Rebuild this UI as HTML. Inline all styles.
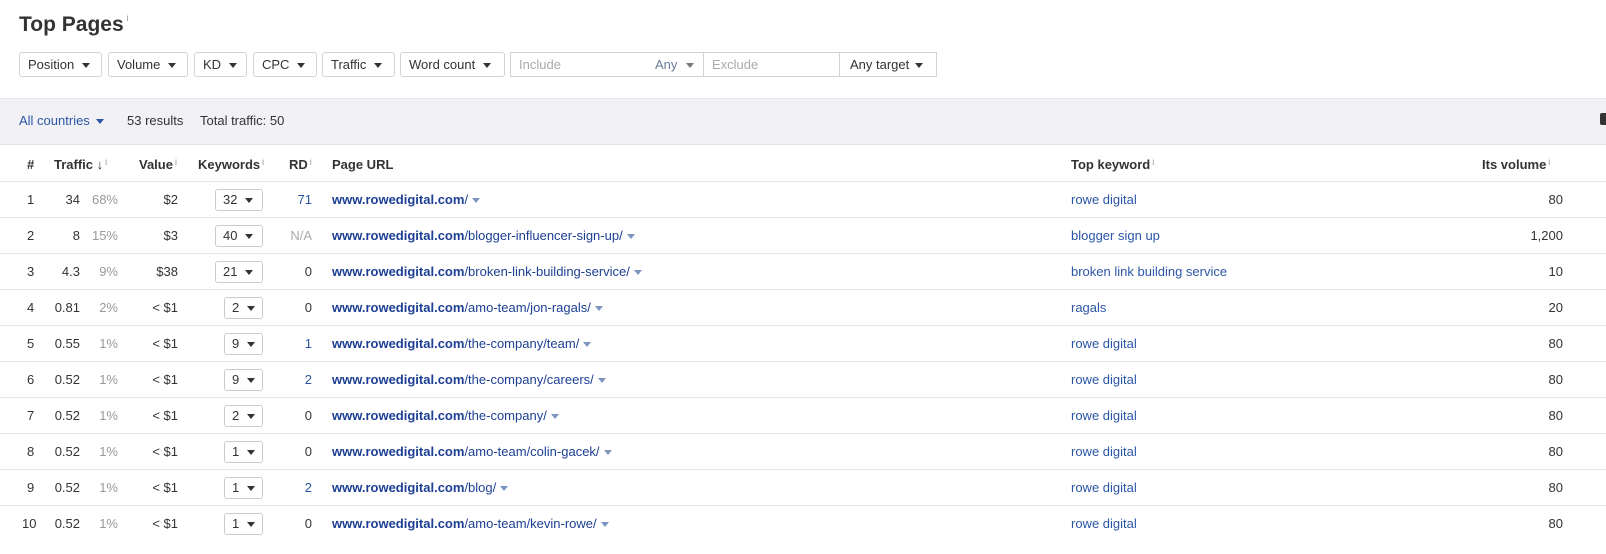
<!DOCTYPE html>
<html><head><meta charset="utf-8"><style>
*{box-sizing:border-box;margin:0;padding:0}
body{width:1606px;height:554px;background:#fff;font-family:"Liberation Sans",Arial,sans-serif;font-size:13px;color:#333;position:relative;overflow:hidden}
.a{position:absolute;white-space:nowrap}
.btn{position:absolute;top:52px;height:25px;border:1px solid #d3d3d3;border-radius:3px;line-height:23px;padding-left:8px;color:#333}
.tri{display:inline-block;width:0;height:0;border-left:4px solid transparent;border-right:4px solid transparent;border-top:5px solid #333;vertical-align:middle;margin-left:8px}
.th{position:absolute;top:157px;font-weight:bold;color:#333}
.i{font-weight:normal;color:#999;font-size:9px;vertical-align:top;margin-left:2px}
.row{position:absolute;left:0;width:1606px;height:36px;border-top:1px solid #e6e6e6}
.row .a{top:10px}
.r{text-align:right}
.sel{position:absolute;top:7px;height:22px;border:1px solid #ccc;border-radius:3px;line-height:20px;padding-left:7px}
.sel .tri{margin-left:8px}
.u{color:#1c3f94}
.u b{color:#1c3f94}
.st{display:inline-block;width:0;height:0;border-left:4px solid transparent;border-right:4px solid transparent;border-top:5px solid #7d93c0;vertical-align:middle;margin-left:4px}
.k{color:#2b56a6}
</style></head><body>
<div class="a" style="left:19px;top:13px;font-size:21px;font-weight:bold;color:#333">Top Pages<span style="font-size:9px;color:#999;font-weight:normal;vertical-align:top;margin-left:3px">i</span></div>
<div class="btn" style="left:19px;width:83px">Position<span class="tri"></span></div>
<div class="btn" style="left:108px;width:80px">Volume<span class="tri"></span></div>
<div class="btn" style="left:194px;width:53px">KD<span class="tri"></span></div>
<div class="btn" style="left:253px;width:64px">CPC<span class="tri"></span></div>
<div class="btn" style="left:322px;width:73px">Traffic<span class="tri"></span></div>
<div class="btn" style="left:400px;width:105px">Word count<span class="tri"></span></div>
<div class="btn" style="left:510px;width:427px;border-radius:0;padding:0">
 <span class="a" style="left:8px;color:#aaa">Include</span>
 <span class="a" style="left:144px;color:#6a7c99">Any<span class="tri" style="border-top-color:#777;margin-left:9px"></span></span>
 <span class="a" style="left:192px;top:0;height:23px;border-left:1px solid #d3d3d3"></span>
 <span class="a" style="left:201px;color:#aaa">Exclude</span>
 <span class="a" style="left:328px;top:0;height:23px;border-left:1px solid #d3d3d3"></span>
 <span class="a" style="left:339px;color:#333">Any target<span class="tri" style="margin-left:6px"></span></span>
</div>
<div class="a" style="left:0;top:98px;width:1606px;height:47px;background:#f2f2f6;border-top:1px solid #e8e8ec;border-bottom:1px solid #e4e4e8"></div>
<div class="a" style="left:19px;top:113px;color:#2b56a6">All countries<span class="tri" style="border-top-color:#2b56a6;margin-left:6px"></span></div>
<div class="a" style="left:127px;top:113px">53 results</div>
<div class="a" style="left:200px;top:113px">Total traffic: 50</div>
<div class="a" style="left:1600px;top:113px;width:10px;height:12px;background:#333;border-radius:2px"></div>
<div class="th" style="left:27px">#</div>
<div class="th" style="left:54px">Traffic ↓<span class="i">i</span></div>
<div class="th" style="left:139px">Value<span class="i">i</span></div>
<div class="th" style="left:198px">Keywords<span class="i">i</span></div>
<div class="th" style="left:289px">RD<span class="i">i</span></div>
<div class="th" style="left:332px">Page URL</div>
<div class="th" style="left:1071px">Top keyword<span class="i">i</span></div>
<div class="th" style="left:1482px">Its volume<span class="i">i</span></div>

<div class="row" style="top:181px"><span class="a" style="left:27px">1</span><span class="a r" style="right:1526px">34</span><span class="a r" style="right:1488px;color:#999">68%</span><span class="a r" style="right:1428px">$2</span><div class="sel" style="left:215px;width:48px">32<span class="tri"></span></div><span class="a r" style="right:1294px;color:#2b56a6">71</span><span class="a u" style="left:332px"><b>www.rowedigital.com</b>/<span class="st"></span></span><span class="a k" style="left:1071px">rowe digital</span><span class="a r" style="right:43px">80</span></div>
<div class="row" style="top:217px"><span class="a" style="left:27px">2</span><span class="a r" style="right:1526px">8</span><span class="a r" style="right:1488px;color:#999">15%</span><span class="a r" style="right:1428px">$3</span><div class="sel" style="left:215px;width:48px">40<span class="tri"></span></div><span class="a r" style="right:1294px;color:#aaa">N/A</span><span class="a u" style="left:332px"><b>www.rowedigital.com</b>/blogger-influencer-sign-up/<span class="st"></span></span><span class="a k" style="left:1071px">blogger sign up</span><span class="a r" style="right:43px">1,200</span></div>
<div class="row" style="top:253px"><span class="a" style="left:27px">3</span><span class="a r" style="right:1526px">4.3</span><span class="a r" style="right:1488px;color:#999">9%</span><span class="a r" style="right:1428px">$38</span><div class="sel" style="left:215px;width:48px">21<span class="tri"></span></div><span class="a r" style="right:1294px">0</span><span class="a u" style="left:332px"><b>www.rowedigital.com</b>/broken-link-building-service/<span class="st"></span></span><span class="a k" style="left:1071px">broken link building service</span><span class="a r" style="right:43px">10</span></div>
<div class="row" style="top:289px"><span class="a" style="left:27px">4</span><span class="a r" style="right:1526px">0.81</span><span class="a r" style="right:1488px;color:#999">2%</span><span class="a r" style="right:1428px">&lt; $1</span><div class="sel" style="left:224px;width:39px">2<span class="tri"></span></div><span class="a r" style="right:1294px">0</span><span class="a u" style="left:332px"><b>www.rowedigital.com</b>/amo-team/jon-ragals/<span class="st"></span></span><span class="a k" style="left:1071px">ragals</span><span class="a r" style="right:43px">20</span></div>
<div class="row" style="top:325px"><span class="a" style="left:27px">5</span><span class="a r" style="right:1526px">0.55</span><span class="a r" style="right:1488px;color:#999">1%</span><span class="a r" style="right:1428px">&lt; $1</span><div class="sel" style="left:224px;width:39px">9<span class="tri"></span></div><span class="a r" style="right:1294px;color:#2b56a6">1</span><span class="a u" style="left:332px"><b>www.rowedigital.com</b>/the-company/team/<span class="st"></span></span><span class="a k" style="left:1071px">rowe digital</span><span class="a r" style="right:43px">80</span></div>
<div class="row" style="top:361px"><span class="a" style="left:27px">6</span><span class="a r" style="right:1526px">0.52</span><span class="a r" style="right:1488px;color:#999">1%</span><span class="a r" style="right:1428px">&lt; $1</span><div class="sel" style="left:224px;width:39px">9<span class="tri"></span></div><span class="a r" style="right:1294px;color:#2b56a6">2</span><span class="a u" style="left:332px"><b>www.rowedigital.com</b>/the-company/careers/<span class="st"></span></span><span class="a k" style="left:1071px">rowe digital</span><span class="a r" style="right:43px">80</span></div>
<div class="row" style="top:397px"><span class="a" style="left:27px">7</span><span class="a r" style="right:1526px">0.52</span><span class="a r" style="right:1488px;color:#999">1%</span><span class="a r" style="right:1428px">&lt; $1</span><div class="sel" style="left:224px;width:39px">2<span class="tri"></span></div><span class="a r" style="right:1294px">0</span><span class="a u" style="left:332px"><b>www.rowedigital.com</b>/the-company/<span class="st"></span></span><span class="a k" style="left:1071px">rowe digital</span><span class="a r" style="right:43px">80</span></div>
<div class="row" style="top:433px"><span class="a" style="left:27px">8</span><span class="a r" style="right:1526px">0.52</span><span class="a r" style="right:1488px;color:#999">1%</span><span class="a r" style="right:1428px">&lt; $1</span><div class="sel" style="left:224px;width:39px">1<span class="tri"></span></div><span class="a r" style="right:1294px">0</span><span class="a u" style="left:332px"><b>www.rowedigital.com</b>/amo-team/colin-gacek/<span class="st"></span></span><span class="a k" style="left:1071px">rowe digital</span><span class="a r" style="right:43px">80</span></div>
<div class="row" style="top:469px"><span class="a" style="left:27px">9</span><span class="a r" style="right:1526px">0.52</span><span class="a r" style="right:1488px;color:#999">1%</span><span class="a r" style="right:1428px">&lt; $1</span><div class="sel" style="left:224px;width:39px">1<span class="tri"></span></div><span class="a r" style="right:1294px;color:#2b56a6">2</span><span class="a u" style="left:332px"><b>www.rowedigital.com</b>/blog/<span class="st"></span></span><span class="a k" style="left:1071px">rowe digital</span><span class="a r" style="right:43px">80</span></div>
<div class="row" style="top:505px"><span class="a" style="left:22px">10</span><span class="a r" style="right:1526px">0.52</span><span class="a r" style="right:1488px;color:#999">1%</span><span class="a r" style="right:1428px">&lt; $1</span><div class="sel" style="left:224px;width:39px">1<span class="tri"></span></div><span class="a r" style="right:1294px">0</span><span class="a u" style="left:332px"><b>www.rowedigital.com</b>/amo-team/kevin-rowe/<span class="st"></span></span><span class="a k" style="left:1071px">rowe digital</span><span class="a r" style="right:43px">80</span></div>
</body></html>
